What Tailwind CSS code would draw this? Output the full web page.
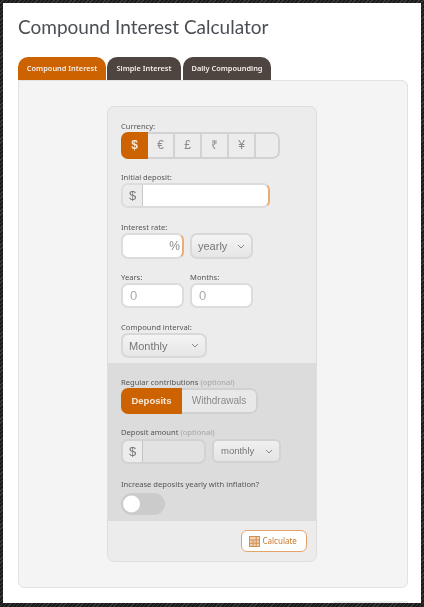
<!DOCTYPE html>
<html>
<head>
<meta charset="utf-8">
<script src="https://cdn.jsdelivr.net/npm/@tailwindcss/browser@4"></script>
</head>
<body class="w-[424px] h-[607px] overflow-hidden bg-[repeating-linear-gradient(135deg,#1c1c1c_0px,#1c1c1c_2px,#3a3a3a_2px,#3a3a3a_3px)] p-[3px_3px_4px_3px] font-['Noto_Sans',sans-serif] text-[#555]">
<main class="h-[600px] w-[418px] bg-white px-[15px] pt-[10px] blur-[0.35px]">
  <h1 class="h-[44px] font-['Lato',sans-serif] text-[19px] leading-[28px] text-[#4a4f55]">Compound Interest Calculator</h1>
  <nav class="flex h-[23px] gap-px text-[7.4px] font-semibold leading-[23px] text-[#f5f0ea]">
    <span class="w-[88px] rounded-t-[10px] bg-[#cc6200] text-center">Compound Interest</span>
    <span class="w-[74px] rounded-t-[10px] bg-[#4e4540] text-center">Simple Interest</span>
    <span class="ml-px w-[88px] rounded-t-[10px] bg-[#4e4540] text-center">Daily Compounding</span>
  </nav>
  <section class="h-[508px] w-[390px] rounded-b-[6px] rounded-tr-[6px] border border-[#e2e2e2] bg-[#f4f4f4] pl-[88px] pt-[25px]">
    <form class="h-[456px] w-[210px] overflow-hidden rounded-[7px] border border-[#dedede] bg-[#ececec] text-[7.6px] leading-[10px] text-[#555]">
      <div class="h-[256px] px-[13px] pt-[14px]">
        <label class="block h-[10px]">Currency:</label>
        <div class="mt-[1px] flex h-[27px] w-[159px] overflow-hidden rounded-[7px] font-['Liberation_Sans',sans-serif] text-center text-[12px] leading-[23px] text-[#8a8a8a]">
          <span class="w-[27px] bg-[#cc6200] font-bold leading-[27px] text-[#f6e9da]">$</span>
          <span class="w-[27px] border-y-2 border-r-2 border-[#d2d2d2]">€</span>
          <span class="w-[27px] border-y-2 border-r-2 border-[#d2d2d2]">£</span>
          <span class="w-[27px] border-y-2 border-r-2 border-[#d2d2d2]">₹</span>
          <span class="w-[27px] border-y-2 border-r-2 border-[#d2d2d2]">¥</span>
          <span class="flex-1 rounded-r-[7px] border-y-2 border-r-2 border-[#d2d2d2]"></span>
        </div>
        <label class="mt-[13px] block h-[10px]">Initial deposit:</label>
        <div class="mt-[1px] flex h-[25px] w-[149px] overflow-hidden rounded-[7px] border-2 border-[#dcdcdc] border-r-[#e9ae78] bg-white">
          <span class="w-[20px] border-r border-[#c8c8c8] bg-[#ececec] font-['Liberation_Sans',sans-serif] text-center text-[13px] leading-[21px] text-[#777]">$</span>
        </div>
        <label class="mt-[14px] block h-[10px]">Interest rate:</label>
        <div class="mt-[1px] flex h-[26px] gap-[6px] font-['Liberation_Sans',sans-serif]">
          <div class="h-[26px] w-[63px] rounded-[7px] border-2 border-[#dcdcdc] border-r-[#e9ae78] bg-white pr-[2px] text-right text-[12px] leading-[22px] text-[#888]">%</div>
          <div class="flex h-[26px] w-[63px] items-center justify-between rounded-[7px] border-2 border-[#d8d8d8] bg-gradient-to-b from-[#f4f4f4] to-[#e6e6e6] pl-[6px] pr-[6px] text-[11px] text-[#777]">
            <span>yearly</span>
            <svg width="8" height="5" viewBox="0 0 8 5" fill="none" stroke="#888"><path d="M1 1l3 3 3-3"/></svg>
          </div>
        </div>
        <div class="mt-[13px] flex gap-[6px]">
          <div class="w-[63px]">
            <label class="block h-[10px]">Years:</label>
            <div class="mt-[1px] h-[25px] rounded-[7px] border-2 border-[#dcdcdc] bg-white pl-[7px] font-['Liberation_Sans',sans-serif] text-[13px] leading-[21px] text-[#aaa]">0</div>
          </div>
          <div class="w-[63px]">
            <label class="block h-[10px]">Months:</label>
            <div class="mt-[1px] h-[25px] rounded-[7px] border-2 border-[#dcdcdc] bg-white pl-[7px] font-['Liberation_Sans',sans-serif] text-[13px] leading-[21px] text-[#aaa]">0</div>
          </div>
        </div>
        <label class="mt-[14px] block h-[10px]">Compound interval:</label>
        <div class="mt-[1px] flex h-[25px] w-[86px] items-center justify-between rounded-[7px] border-2 border-[#d8d8d8] bg-gradient-to-b from-[#f4f4f4] to-[#e6e6e6] pl-[6px] pr-[6px] font-['Liberation_Sans',sans-serif] text-[11px] text-[#777]">
          <span>Monthly</span>
          <svg width="8" height="5" viewBox="0 0 8 5" fill="none" stroke="#888"><path d="M1 1l3 3 3-3"/></svg>
        </div>
      </div>
      <div class="h-[158px] bg-[#dcdcdc] px-[13px] pt-[14px]">
        <label class="block h-[10px]">Regular contributions <span class="text-[#a5a5a5]">(optional)</span></label>
        <div class="mt-[1px] flex h-[26px] w-[137px] overflow-hidden rounded-[7px] bg-[#e8e8e8] font-['Liberation_Sans',sans-serif] text-center text-[10px] leading-[22px] text-[#8a8a8a]">
          <span class="w-[61px] bg-[#cc6200] text-[9.5px] font-bold leading-[26px] text-[#f6e9da]">Deposits</span>
          <span class="flex-1 rounded-r-[7px] border-y-2 border-r-2 border-[#d0d0d0]">Withdrawals</span>
        </div>
        <label class="mt-[13px] block h-[10px]">Deposit amount <span class="text-[#a5a5a5]">(optional)</span></label>
        <div class="mt-[2px] flex h-[25px] gap-[6px] font-['Liberation_Sans',sans-serif]">
          <div class="flex h-[25px] w-[85px] overflow-hidden rounded-[7px] border-2 border-[#d2d2d2] bg-[#e2e2e2]">
            <span class="w-[20px] border-r border-[#c4c4c4] bg-[#ececec] text-center text-[13px] leading-[21px] text-[#777]">$</span>
          </div>
          <div class="flex h-[24px] w-[69px] items-center justify-between rounded-[6px] border-2 border-[#d2d2d2] bg-gradient-to-b from-[#f0f0f0] to-[#e4e4e4] pl-[7px] pr-[6px] text-[9.5px] text-[#777]">
            <span>monthly</span>
            <svg width="8" height="5" viewBox="0 0 8 5" fill="none" stroke="#888"><path d="M1 1l3 3 3-3"/></svg>
          </div>
        </div>
        <label class="mt-[15px] block h-[10px]">Increase deposits yearly with inflation?</label>
        <div class="mt-[4px] h-[22px] w-[44px] rounded-full bg-[#cbcbcb] p-[2px]">
          <div class="h-[17px] w-[17px] translate-y-[0.5px] rounded-full bg-white"></div>
        </div>
      </div>
      <div class="flex justify-end pr-[9px] pt-[9px]">
        <button type="button" class="flex h-[22px] w-[66px] items-center justify-start gap-[3px] rounded-[6px] border-[1.5px] border-[#e2a468] bg-white pl-[6.5px] text-[8px] text-[#c8752a]">
          <svg width="11" height="11" viewBox="0 0 11 11" fill="#f0d4b4" stroke="#d28f52" stroke-width="1"><rect x="0.5" y="0.5" width="10" height="10"/><path d="M0.5 4h10M0.5 7.2h10M4 4v6.5M7.2 0.5v10"/></svg>
          <span>Calculate</span>
        </button>
      </div>
    </form>
  </section>
  <div class="ml-[315px] mt-[13px] h-[2px] w-[75px] bg-[#ececec]"></div>
</main>
</body>
</html>
